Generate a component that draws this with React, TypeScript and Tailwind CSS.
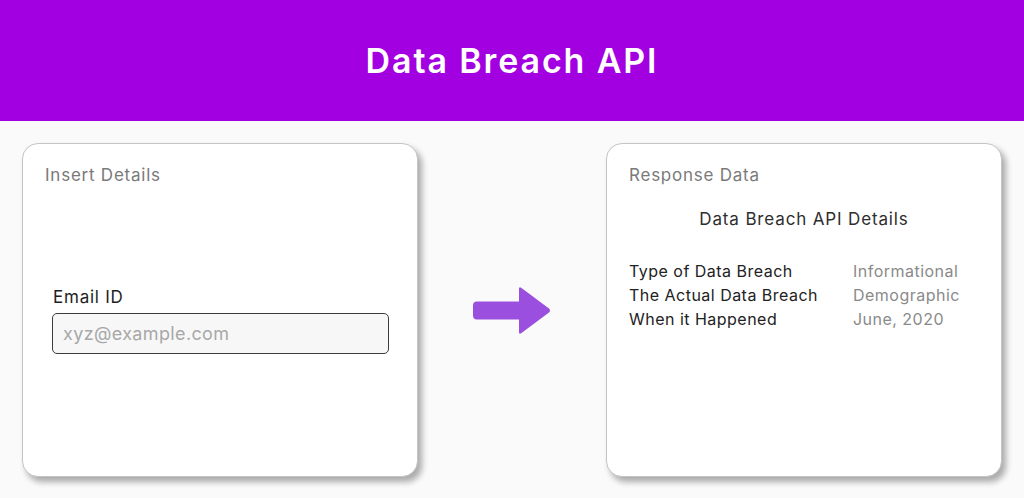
import React from 'react';

const rows = [
  { label: 'Type of Data Breach', value: 'Informational' },
  { label: 'The Actual Data Breach', value: 'Demographic' },
  { label: 'When it Happened', value: 'June, 2020' },
];

const Arrow: React.FC = () => (
  <svg width="78" height="49" viewBox="0 0 78 49" className="shrink-0">
    <path
      d="M4 15.5 H46 V3 Q46 0 48.5 2 L76 22.5 Q78 24.5 76 26.5 L48.5 47 Q46 49 46 46 V33.5 H4 Q0 33.5 0 29.5 V19.5 Q0 15.5 4 15.5 Z"
      fill="#9a4fdf"
    />
  </svg>
);

const Card: React.FC<{ title: string; children: React.ReactNode }> = ({ title, children }) => (
  <div className="w-[396px] h-[334px] bg-white border border-[#c4c4c4] rounded-[16px] shadow-[4px_5px_6px_rgba(0,0,0,0.32)] pt-[19px]">
    <h2 className="px-[22px] text-[17px] leading-6 tracking-[0.045em] text-[#7a7a7a]">{title}</h2>
    {children}
  </div>
);

const App: React.FC = () => {
  return (
    <div className="min-h-[498px] bg-[#fafafa] font-['Inter',sans-serif]">
      <header className="h-[121px] bg-[#a300e2] flex items-center justify-center">
        <h1 className="text-white text-[34px] font-semibold tracking-[0.055em]">Data Breach API</h1>
      </header>

      <main className="flex items-center justify-between px-[22px] pt-[22px]">
        <Card title="Insert Details">
          <div className="mt-[98px] pl-[29px] pr-[28px]">
            <label className="block pl-px text-[17px] leading-6 tracking-[0.045em] text-[#1e1e1e]">Email ID</label>
            <input
              type="text"
              placeholder="xyz@example.com"
              className="mt-1 w-full h-[41px] rounded-[5px] border border-[#3c3c3c] bg-[#f7f7f7] px-[10px] text-[18px] tracking-[0.02em] placeholder:text-[#a8a8a8] outline-none"
            />
          </div>
        </Card>

        <Arrow />

        <Card title="Response Data">
          <p className="mt-5 text-center text-[17px] leading-6 tracking-[0.05em] text-[#2e2e2e]">Data Breach API Details</p>
          <div className="mt-7 pl-[22px] grid grid-cols-[224px_1fr] text-[16px] leading-6 tracking-[0.03em]">
            {rows.map((r) => (
              <React.Fragment key={r.label}>
                <span className="text-[#222]">{r.label}</span>
                <span className="text-[#8a8a8a]">{r.value}</span>
              </React.Fragment>
            ))}
          </div>
        </Card>
      </main>
    </div>
  );
};

export default App;
